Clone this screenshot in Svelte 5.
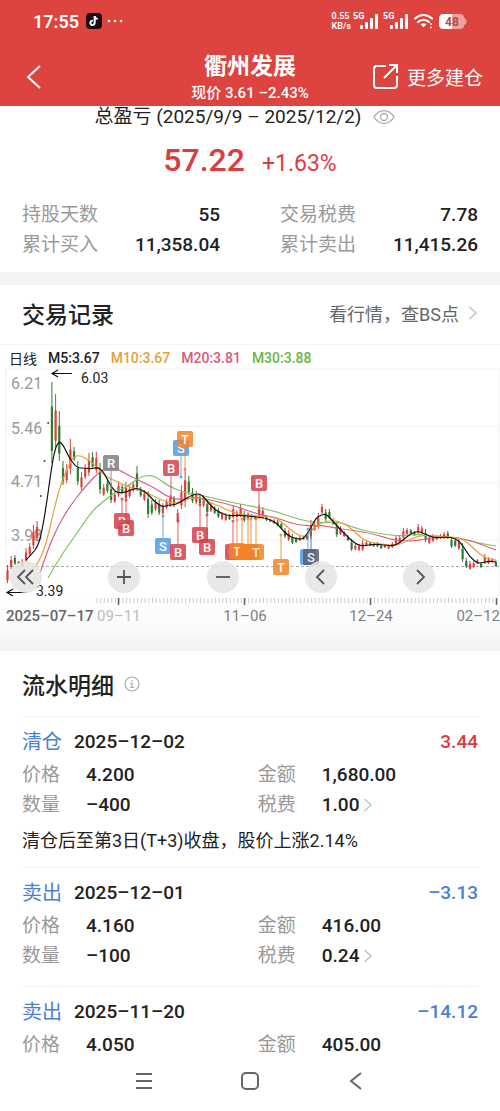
<script>
	const stats = [
		{ label: '持股天数', value: '55' },
		{ label: '交易税费', value: '7.78' },
		{ label: '累计买入', value: '11,358.04' },
		{ label: '累计卖出', value: '11,415.26' }
	];

	const records = [
		{
			type: '清仓',
			date: '2025–12–02',
			profit: '3.44',
			up: true,
			price: '4.200',
			amount: '1,680.00',
			count: '–400',
			tax: '1.00',
			note: '清仓后至第3日(T+3)收盘，股价上涨2.14%'
		},
		{
			type: '卖出',
			date: '2025–12–01',
			profit: '–3.13',
			price: '4.160',
			amount: '416.00',
			count: '–100',
			tax: '0.24'
		},
		{ type: '卖出', date: '2025–11–20', profit: '–14.12', price: '4.050', amount: '405.00' }
	];

	const step = 3.7;

	// one candle per trading day: [high, low, direction], d = limit-up dot
	const candles = [
		[564, 582, 'r'], [555, 568, 'r'], [554, 564, 'g'], [560, 563, 'g'], [558, 566, 'r'], [547, 562, 'r'],
		[542, 555, 'r'], [524, 548, 'r'], [520, 540, 'r'], [495, 496, 'd'], [460, 461, 'd'], [422, 423, 'd'],
		[381, 462, 'g'], [393, 448, 'r'], [410, 460, 'g'], [460, 484, 'g'], [463, 482, 'r'], [438, 473, 'r'],
		[446, 460, 'g'], [460, 484, 'g'], [471, 489, 'r'], [463, 478, 'r'], [452, 475, 'r'], [451, 468, 'g'],
		[451, 472, 'r'], [462, 493, 'g'], [483, 495, 'r'], [478, 492, 'g'], [482, 502, 'g'], [490, 502, 'r'],
		[480, 496, 'r'], [483, 493, 'g'], [481, 500, 'r'], [484, 497, 'r'], [480, 491, 'r'], [465, 490, 'g'],
		[486, 496, 'g'], [489, 500, 'r'], [490, 517, 'g'], [499, 514, 'g'], [498, 510, 'r'], [499, 514, 'g'],
		[502, 514, 'r'], [498, 508, 'r'], [494, 506, 'r'], [495, 506, 'g'], [508, 522, 'r'], [484, 508, 'r'],
		[468, 506, 'r'], [475, 494, 'g'], [487, 502, 'g'], [490, 503, 'r'], [493, 504, 'g'], [494, 506, 'r'],
		[499, 513, 'g'], [502, 511, 'r'], [505, 513, 'g'], [507, 517, 'g'], [511, 519, 'r'], [512, 520, 'r'],
		[513, 519, 'g'], [504, 518, 'r'], [509, 517, 'r'], [503, 516, 'r'], [510, 521, 'g'], [511, 518, 'r'],
		[513, 517, 'g'], [514, 519, 'g'], [504, 518, 'r'], [506, 518, 'r'], [514, 520, 'g'], [518, 521, 'r'],
		[518, 523, 'r'], [519, 525, 'g'], [521, 528, 'g'], [527, 537, 'g'], [529, 540, 'r'], [533, 543, 'g'],
		[536, 542, 'g'], [535, 540, 'r'], [535, 539, 'r'], [533, 539, 'g'], [519, 538, 'r'], [521, 530, 'r'],
		[512, 528, 'r'], [503, 513, 'r'], [508, 520, 'g'], [508, 518, 'g'], [517, 524, 'r'], [520, 536, 'g'],
		[525, 534, 'r'], [530, 536, 'r'], [534, 540, 'g'], [538, 550, 'g'], [543, 549, 'r'], [543, 550, 'r'],
		[539, 550, 'r'], [540, 545, 'r'], [541, 545, 'g'], [542, 546, 'r'], [541, 546, 'g'], [543, 548, 'g'],
		[543, 547, 'r'], [543, 548, 'r'], [541, 547, 'r'], [534, 544, 'r'], [534, 543, 'r'], [527, 538, 'r'],
		[527, 534, 'r'], [528, 533, 'g'], [530, 535, 'g'], [523, 533, 'r'], [525, 533, 'r'], [528, 541, 'g'],
		[534, 543, 'r'], [533, 541, 'r'], [534, 539, 'r'], [533, 538, 'r'], [531, 538, 'r'], [530, 538, 'g'],
		[536, 547, 'g'], [537, 546, 'g'], [538, 549, 'r'], [542, 561, 'g'], [557, 567, 'g'], [560, 569, 'r'],
		[560, 567, 'r'], [558, 563, 'r'], [561, 567, 'g'], [553, 563, 'r'], [556, 563, 'r'], [557, 562, 'r'],
		[559, 566, 'g']
	];

	const lines = [
		{
			name: 'm30',
			points: '48,577 60,556 75,535 92,510 104,500 114,492 128,485 140,476 150,474 158,477 168,485 185,492 205,495 225,500 250,505 275,510 300,519 320,522 340,521 352,526 370,531 390,534 402,535 420,533 440,536 460,537 478,542 496,545'
		},
		{
			name: 'm20',
			points: '40,572 48,548 58,525 70,505 84,487 98,472 106,467 116,467 126,473 140,480 155,487 166,495 178,499 196,496 215,500 235,505 260,514 275,516 290,522 305,525 320,524 335,527 350,529 370,532 390,538 402,540 415,540 430,537 450,536 465,538 480,543 496,549'
		},
		{
			name: 'm10',
			points: '32,570 40,560 48,536 56,500 62,480 68,466 73,456 80,454 90,460 98,467 106,476 116,480 124,484 134,488 146,491 155,496 166,501 178,502 190,497 200,497 212,502 225,508 240,514 260,515 275,516 285,524 296,533 304,536 311,530 320,522 333,519 343,522 352,528 362,538 372,542 385,543 395,545 405,541 420,534 436,535 455,536 465,539 475,549 485,557 496,559'
		},
		{
			name: 'm5',
			points: '26,559 32,553 38,545 42,530 47,500 51,470 55,448 59,440 63,444 66,450 70,458 77,467 85,467 92,468 97,466 103,470 107,478 114,490 120,492 126,491 131,489 136,487 142,489 148,493 153,499 158,503 163,506 168,504 175,504 182,500 190,495 196,493 201,493 207,500 213,507 222,513 231,515 240,514 256,516 266,517 275,521 281,527 287,534 296,538 304,538 310,528 316,517 321,514 326,513 331,518 338,526 346,534 352,540 358,544 364,545 374,543 384,544 394,545 402,540 410,533 418,530 425,533 434,537 445,536 455,537 462,543 469,555 477,562 482,562 489,560 496,561'
		}
	];

	// letter, centre, end of the stem, colour
	const marks = [
		['R', 111, 462, 485, 'grey'],
		['B', 122, 520, 498, 'buy'],
		['B', 126, 527, 499, 'buy'],
		['S', 163, 545, 515, 'sell'],
		['B', 171, 467, 497, 'buy'],
		['B', 178, 551, 520, 'buy'],
		['S', 181, 447, 476, 'sell'],
		['T', 185, 438, 468, 'both'],
		['B', 200, 534, 504, 'buy'],
		['B', 207, 546, 514, 'buy'],
		['', 233, 551, 520, 'buy'],
		['', 242, 551, 518, 'both'],
		['T', 237, 550, 519, 'both'],
		['', 248, 551, 518, 'both'],
		['', 251, 551, 518, 'both'],
		['T', 256, 551, 518, 'both'],
		['B', 259, 482, 510, 'buy'],
		['T', 281, 566, 534, 'both'],
		['', 308, 556, 528, 'sell'],
		['S', 311, 556, 528, 'dark']
	];

	const prices = [['6.21', 388], ['5.46', 433], ['4.71', 486], ['3.98', 540]];
	const dates = [['11–06', 245, 'middle'], ['12–24', 371, 'middle'], ['02–12', 500, 'end']];
	const ticks = Array.from({ length: 109 }, (_, i) => 97 + i * step);

	function smooth(points) {
		const p = points.split(' ').map((s) => s.split(',').map(Number));
		let d = `M${p[0]}`;
		for (let i = 1; i < p.length - 1; i++) {
			d += ` Q${p[i]} ${(p[i][0] + p[i + 1][0]) / 2},${(p[i][1] + p[i + 1][1]) / 2}`;
		}
		return `${d} L${p[p.length - 1]}`;
	}
</script>

{#snippet arrow()}
	<svg class="arrow" width="10" height="16" viewBox="0 0 10 16"><path d="M1.500 2l6.500 6-6.500 6" /></svg>
{/snippet}

{#snippet signal()}
	<svg width="25" height="18" viewBox="0 0 25 18">
		<text x="0" y="7" class="net">5G</text>
		<g fill="#fff">
			<rect x="7" y="13" width="3" height="4" rx="1" />
			<rect x="12" y="10" width="3" height="7" rx="1" />
			<rect x="17" y="6" width="3" height="11" rx="1" />
			<rect x="22" y="2" width="3" height="15" rx="1" />
		</g>
	</svg>
{/snippet}

<header>
	<div class="status">
		<span class="time">17:55</span>
		<svg width="16" height="16" viewBox="0 0 16 16">
			<rect width="16" height="16" rx="4" fill="#1a0c10" />
			<path d="M8.300 3v6.800a2 2 0 1 1-2-2" fill="none" stroke="#3ee0e0" stroke-width="1.600" />
			<path d="M8.800 3v7a2.200 2.200 0 1 1-2-2.300M8.800 3.200c.3 1.700 1.300 2.600 3 2.800" fill="none" stroke="#fff" stroke-width="1.700" />
		</svg>
		<svg width="16" height="4" viewBox="0 0 16 4" fill="#fff">
			<circle cx="2" cy="2" r="1.300" /><circle cx="8" cy="2" r="1.300" /><circle cx="14" cy="2" r="1.300" />
		</svg>
		<span class="speed">0.55<br />KB/s</span>
		{@render signal()}
		{@render signal()}
		<svg width="21" height="16" viewBox="0 0 21 16" fill="none" stroke="#fff" stroke-width="2.200" stroke-linecap="round">
			<path d="M2 5.500c5-4.700 12-4.700 17 0M5 9c3.300-3 7.700-3 11 0" />
			<path d="M7.500 11.300c2-1.500 4-1.500 6 0l-3 3z" fill="#fff" stroke="none" />
			<path d="M18 11v.1M18 14.500v.1" stroke-width="2" />
		</svg>
		<svg width="28" height="15" viewBox="0 0 28 15">
			<path d="M5 0h16c3 0 4 1.500 4.300 4 3 1 3 6 0 7-.3 2.500-1.300 4-4.300 4H5c-3.500 0-5-1.500-5-5V5c0-3.500 1.500-5 5-5z" fill="#f0a09d" />
			<path d="M5 0h8v15H5c-3.500 0-5-1.500-5-5V5c0-3.500 1.500-5 5-5z" fill="#fff" />
			<text x="13" y="12" text-anchor="middle" class="battery">48</text>
		</svg>
	</div>
	<div class="bar">
		<button class="back" aria-label="返回">
			<svg width="16" height="26" viewBox="0 0 16 26"><path d="M14 2L2 13l12 11" fill="none" stroke="#fff" stroke-width="2" /></svg>
		</button>
		<div class="title">
			<h1>衢州发展</h1>
			<p>现价 3.61 –2.43%</p>
		</div>
		<button class="more">
			<svg width="27" height="27" viewBox="0 0 27 27" fill="none" stroke="#fff" stroke-width="2">
				<path d="M14 3H5Q2 3 2 6v16q0 3 3 3h17q3 0 3-3v-9M12 15L25 2M17 2h8v8" />
			</svg>
			更多建仓
		</button>
	</div>
</header>

<main>
	<section class="summary">
		<div class="period">
			总盈亏 (2025/9/9 – 2025/12/2)
			<button aria-label="隐藏金额">
				<svg width="22" height="16" viewBox="0 0 22 16" fill="none" stroke="#aaa" stroke-width="1.300">
					<path d="M1 8c5-8.500 15-8.500 20 0-5 8.500-15 8.500-20 0z" /><circle cx="11" cy="8" r="3.500" />
				</svg>
			</button>
		</div>
		<div class="total"><strong>57.22</strong><span>+1.63%</span></div>
		<div class="stats">
			{#each stats as s}
				<div class="stat"><span class="label">{s.label}</span><b>{s.value}</b></div>
			{/each}
		</div>
	</section>

	<section class="trades">
		<div class="heading">
			<h2>交易记录</h2>
			<a href="#market">看行情，查BS点 {@render arrow()}</a>
		</div>
		<div class="legend">
			<span>日线</span>
			<b>M5:3.67</b>
			<b class="m10">M10:3.67</b>
			<b class="m20">M20:3.81</b>
			<b class="m30">M30:3.88</b>
		</div>
		<div class="chart">
			<svg viewBox="0 366 500 272">
				<defs>
					<linearGradient id="fade" x1="0" y1="0" x2="0" y2="1">
						<stop offset="0" stop-color="#fff" /><stop offset="1" stop-color="#f8f8f8" />
					</linearGradient>
				</defs>
				<rect x="0" y="596" width="500" height="42" fill="url(#fade)" />
				<path class="grid" d="M6 596V368H499V596M6 425H499M6 482H499M6 539H499" />
				{#each prices as [price, y]}
					<text class="price" x="11" {y}>{price}</text>
				{/each}
				<path class="now" d="M6 565.500H499" />

				{#each candles as [high, low, dir], i}
					{#if dir === 'd'}
						<circle cx={7.5 + i * step} cy={high} r="1" fill="#444" />
					{:else}
						<path class={dir} d="M{7.5 + i * step} {high}V{low}" stroke-width="1" />
						<path class={dir} d="M{7.5 + i * step} {high + (low - high) * 0.3}V{low - (low - high) * 0.15}" stroke-width="2.200" />
					{/if}
				{/each}

				{#each lines as line}
					<path class="line {line.name}" d={smooth(line.points)} />
				{/each}

				{#each marks as [letter, x, y, end, kind]}
					<g class="mark {kind}">
						<path class="stem" d="M{x} {y}V{end}" />
						<circle cx={x} cy={end} r="1.500" />
						<rect x={x - 8} y={y - 8} width="16" height="16" rx="2" />
						<text {x} y={y + 5} text-anchor="middle">{letter}</text>
					</g>
				{/each}

				<path class="pointer" d="M72 372.500H52M58 369l-6 3.500 6 3.500M27 591.500H7M13 588l-6 3.500 6 3.500" />
				<text class="extreme" x="81" y="382">6.03</text>
				<text class="extreme" x="36" y="595">3.39</text>

				{#each ticks as x}
					<path class="tick" d="M{x} 597V602" />
				{/each}
				<path class="major" d="M118.500 597v7M244.500 597v7M370.500 597v7M496.500 597v7" />
				<text class="date first" x="6" y="620">2025–07–17</text>
				<text class="date pale" x="97" y="620">09–11</text>
				{#each dates as [text, x, anchor]}
					<text class="date" {x} y="620" text-anchor={anchor}>{text}</text>
				{/each}
			</svg>
			<div class="controls">
				<button aria-label="最早"><svg viewBox="0 0 32 32"><path d="M15 9l-7 7 7 7M23 9l-7 7 7 7" /></svg></button>
				<button aria-label="放大"><svg viewBox="0 0 32 32"><path d="M9 16h14M16 9v14" /></svg></button>
				<button aria-label="缩小"><svg viewBox="0 0 32 32"><path d="M9 16h14" /></svg></button>
				<button aria-label="向左"><svg viewBox="0 0 32 32"><path d="M19 9l-7 7 7 7" /></svg></button>
				<button aria-label="向右"><svg viewBox="0 0 32 32"><path d="M14 9l7 7-7 7" /></svg></button>
			</div>
		</div>
	</section>

	<section class="flow">
		<div class="heading">
			<h2>流水明细</h2>
			<svg width="16" height="16" viewBox="0 0 16 16" fill="none" stroke="#aaa" stroke-width="1.200">
				<circle cx="8" cy="8" r="7" /><path d="M8 4v1.500M6.500 7.200H8v4M6 11.500h4" />
			</svg>
		</div>
		{#each records as r}
			<article>
				<div class="top">
					<span class="type">{r.type}</span>
					<b>{r.date}</b>
					<span class="profit" class:up={r.up}>{r.profit}</span>
				</div>
				<div class="detail">
					<span class="label">价格</span><b>{r.price}</b>
					<span class="label">金额</span><b>{r.amount}</b>
					{#if r.count}
						<span class="label">数量</span><b>{r.count}</b>
						<span class="label">税费</span><b>{r.tax} {@render arrow()}</b>
					{/if}
				</div>
				{#if r.note}
					<p>{r.note}</p>
				{/if}
			</article>
		{/each}
	</section>
</main>

<nav>
	<button aria-label="菜单"><svg viewBox="0 0 20 20"><path d="M2 3h16M2 10h16M2 17h16" /></svg></button>
	<button aria-label="主页"><svg viewBox="0 0 20 20"><rect x="2" y="2" width="16" height="16" rx="4" /></svg></button>
	<button aria-label="后退"><svg viewBox="0 0 20 20"><path d="M15 2L5 10l10 8" /></svg></button>
</nav>

<style>
	:global(body) {
		background: #fff;
		color: #222;
		font-family: Roboto, 'Noto Sans CJK SC', sans-serif;
		font-size: 19px;
	}

	h1,
	h2,
	p {
		margin: 0;
		font-weight: 500;
	}

	button {
		padding: 0;
		border: none;
		background: none;
		color: inherit;
		font: inherit;
		cursor: pointer;
	}

	svg {
		flex: none;
		display: block;
	}

	b {
		font-weight: 500;
	}

	header {
		background: #dd433f;
		color: #fff;
	}

	.status {
		display: flex;
		align-items: center;
		height: 42px;
		padding: 0 33px;
		gap: 5px;
	}

	.time {
		margin-right: 2px;
		font-size: 18px;
		font-weight: 600;
	}

	.speed {
		margin-left: auto;
		margin-right: -3px;
		font-size: 9px;
		font-weight: 600;
		line-height: 10px;
	}

	.net {
		fill: #fff;
		font-size: 9px;
		font-weight: 700;
	}

	.battery {
		fill: #a8504e;
		font-size: 12px;
		font-weight: 700;
	}

	.bar {
		display: grid;
		grid-template-columns: 1fr auto 1fr;
		align-items: center;
		height: 56px;
		padding: 8px 17px 0;
	}

	.back {
		justify-self: start;
		padding: 0 9px 2px;
	}

	.title {
		text-align: center;
	}

	.title h1 {
		font-size: 23px;
		font-weight: 700;
		line-height: 30px;
	}

	.title p {
		font-size: 15px;
		line-height: 22px;
	}

	.more {
		display: flex;
		justify-self: end;
		align-items: center;
		gap: 8px;
		padding-bottom: 3px;
	}

	.summary {
		padding: 0 22px 12px;
	}

	.period {
		display: flex;
		justify-content: center;
		align-items: center;
		gap: 12px;
		height: 22px;
		padding-right: 10px;
		line-height: 22px;
	}

	.total {
		display: flex;
		justify-content: center;
		align-items: baseline;
		gap: 17px;
		margin: 12px 0 16px;
		color: #dc3c40;
		line-height: 40px;
	}

	.total strong {
		font-size: 32px;
		font-weight: 500;
	}

	.total span {
		font-size: 23px;
	}

	.stats {
		display: grid;
		grid-template-columns: 1fr 1fr;
		column-gap: 60px;
		line-height: 30px;
	}

	.stat {
		display: flex;
		justify-content: space-between;
	}

	.label {
		color: #999;
	}

	.trades {
		border-top: 13px solid #f4f4f4;
		border-bottom: 12px solid #f4f4f4;
	}

	.heading {
		display: flex;
		align-items: center;
		box-sizing: border-box;
		height: 60px;
		padding: 0 22px 3px;
		border-bottom: 1px solid #f4f4f4;
	}

	.heading h2 {
		font-size: 23px;
	}

	.heading a {
		display: flex;
		align-items: center;
		gap: 9px;
		margin-left: auto;
		color: #666;
		font-size: 18px;
		text-decoration: none;
	}

	.arrow {
		display: inline-block;
		fill: none;
		stroke: #c4c4c4;
		stroke-width: 1.5;
	}

	.legend {
		display: flex;
		align-items: center;
		gap: 11px;
		height: 22px;
		padding: 3px 9px 0;
		box-sizing: border-box;
		font-size: 14px;
	}

	.legend .m10 {
		color: #e0a33c;
	}

	.legend .m20 {
		color: #dc5a78;
	}

	.legend .m30 {
		color: #6cb545;
	}

	.chart {
		position: relative;
	}

	.chart > svg {
		width: 100%;
	}

	.grid {
		fill: none;
		stroke: #f0f0f0;
	}

	.now {
		stroke: #aaa;
		stroke-dasharray: 3 2;
	}

	.price {
		fill: #999;
		font-size: 16px;
	}

	.r {
		stroke: #d9433f;
	}

	.g {
		stroke: #2f7d32;
	}

	.line {
		fill: none;
		stroke-width: 1.2;
	}

	.line.m5 {
		stroke: #111;
	}

	.line.m10 {
		stroke: #e6a23c;
	}

	.line.m20 {
		stroke: #dc5a80;
	}

	.line.m30 {
		stroke: #7cc458;
	}

	.mark {
		opacity: 0.85;
	}

	.mark text {
		fill: #fff;
		font-size: 13px;
		font-weight: 500;
	}

	.mark .stem {
		stroke-width: 1;
	}

	.buy {
		fill: #d5404a;
		stroke: #d5404a;
	}

	.sell {
		fill: #5398e8;
		stroke: #5398e8;
	}

	.both {
		fill: #f28427;
		stroke: #f28427;
	}

	.grey {
		fill: #808080;
		stroke: #808080;
	}

	.dark {
		fill: #56616e;
		stroke: #56616e;
	}

	.mark rect,
	.mark text,
	.mark circle {
		stroke: none;
	}

	.pointer {
		fill: none;
		stroke: #111;
		stroke-width: 1.2;
	}

	.extreme {
		fill: #222;
		font-size: 14px;
	}

	.tick {
		stroke: #ccc;
	}

	.major {
		stroke: #666;
		stroke-width: 1.5;
	}

	.date {
		fill: #808080;
		font-size: 15px;
	}

	.date.first {
		fill: #666;
		font-weight: 500;
	}

	.date.pale {
		fill: #bbb;
	}

	.controls {
		position: absolute;
		left: 2%;
		right: 13%;
		bottom: 46px;
		display: flex;
		justify-content: space-between;
	}

	.controls button {
		width: 32px;
		height: 32px;
		border-radius: 50%;
		background: rgba(228, 228, 228, 0.85);
	}

	.controls svg {
		fill: none;
		stroke: #555;
		stroke-width: 1.8;
	}

	.flow .heading {
		gap: 10px;
		height: 65px;
		padding-bottom: 0;
		border: none;
	}

	article {
		margin: 0 22px;
		padding: 10px 0 15px;
		border-top: 1px solid #f0f0f0;
	}

	.top {
		display: flex;
		gap: 12px;
		margin-bottom: 3px;
		line-height: 30px;
	}

	.type,
	.profit {
		color: #4a80d0;
	}

	.type {
		font-size: 20px;
	}

	.profit {
		margin-left: auto;
		font-weight: 500;
	}

	.profit.up {
		color: #d93a3e;
	}

	.detail {
		display: grid;
		grid-template-columns: 64px 11fr 64px 10fr;
		line-height: 30px;
	}

	.detail b {
		display: flex;
		align-items: center;
		gap: 4px;
	}

	article p {
		margin-top: 10px;
		font-size: 18px;
		font-weight: 400;
		line-height: 22px;
	}

	article:last-child {
		padding-bottom: 0;
	}

	nav {
		display: flex;
		justify-content: center;
		gap: 86px;
		padding: 11px 0 21px;
	}

	nav svg {
		width: 20px;
		height: 20px;
		fill: none;
		stroke: #666;
		stroke-width: 2;
	}
</style>
